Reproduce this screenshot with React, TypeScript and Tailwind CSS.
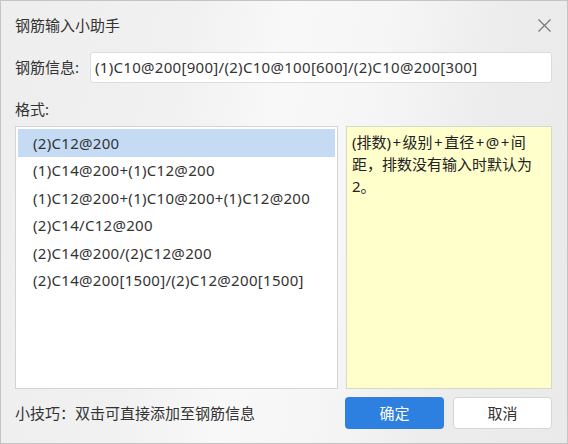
import React from "react";

const rows = [
  "(2)C12@200",
  "(1)C14@200+(1)C12@200",
  "(1)C12@200+(1)C10@200+(1)C12@200",
  "(2)C14/C12@200",
  "(2)C14@200/(2)C12@200",
  "(2)C14@200[1500]/(2)C12@200[1500]",
];

export default function App() {
  return (
    <div
      className="w-[568px] h-[444px] border border-[#c4c4c4] flex flex-col text-[#333] bg-[linear-gradient(100deg,#eeeeee_0%,#f1f1f1_30%,#f8f8f8_45%,#f6f6f6_60%,#ececec_80%,#eaeaea_100%)]"
      style={{ fontFamily: '"Noto Sans", "Noto Sans CJK SC", sans-serif' }}
    >
      <div className="h-[48px] flex items-center justify-between pl-[14px] pr-[16px]">
        <span className="text-[15px]">钢筋输入小助手</span>
        <svg width="13" height="13" viewBox="0 0 13 13" className="text-[#777]">
          <path d="M0.5 0.5L12.5 12.5M12.5 0.5L0.5 12.5" stroke="currentColor" strokeWidth="1.2" fill="none" />
        </svg>
      </div>
      <div className="flex items-center pl-[14px] pr-[15px] h-[31px] mt-[3px]">
        <span className="text-[15px] w-[75px]">钢筋信息:</span>
        <div className="flex-1 h-[31px] bg-white border border-[#dcdcdc] rounded-[3px] flex items-center pl-[4px] text-[15px] tracking-[0.3px] text-[#333]">
          (1)C10@200[900]/(2)C10@100[600]/(2)C10@200[300]
        </div>
      </div>
      <div className="pl-[14px] text-[15px] mt-[16px] h-[20px] leading-[20px]">格式:</div>
      <div className="flex gap-[8px] pl-[14px] pr-[15px] mt-[7px] h-[263px]">
        <div className="w-[323px] bg-white border border-[#d4d4d4] p-[2px]">
          {rows.map((r, i) => (
            <div
              key={i}
              className={`h-[27.5px] flex items-center pl-[15px] text-[15px] tracking-[0.3px] text-[#333] ${i === 0 ? "bg-[#c4dbf3]" : ""}`}
            >
              {r}
            </div>
          ))}
        </div>
        <div className="flex-1 bg-[#ffffcc] border border-[#d8d8c8] pl-[5px] pr-[16px] pt-[4px] text-[15px] leading-[22px] text-[#222] [word-spacing:-2.4px]">
          (排数) + 级别 + 直径 + @ + 间距，排数没有输入时默认为2。
        </div>
      </div>
      <div className="flex items-center pl-[14px] pr-[15px] mt-[8px] h-[32px]">
        <span className="text-[15px] flex-1">小技巧：双击可直接添加至钢筋信息</span>
        <div className="flex gap-[9px]">
          <button className="w-[99px] h-[32px] rounded-[4px] bg-[#2d7fe0] text-white text-[15px]">确定</button>
          <button className="w-[99px] h-[32px] rounded-[4px] bg-white border border-[#d6d6d6] text-[#333] text-[15px]">取消</button>
        </div>
      </div>
    </div>
  );
}
